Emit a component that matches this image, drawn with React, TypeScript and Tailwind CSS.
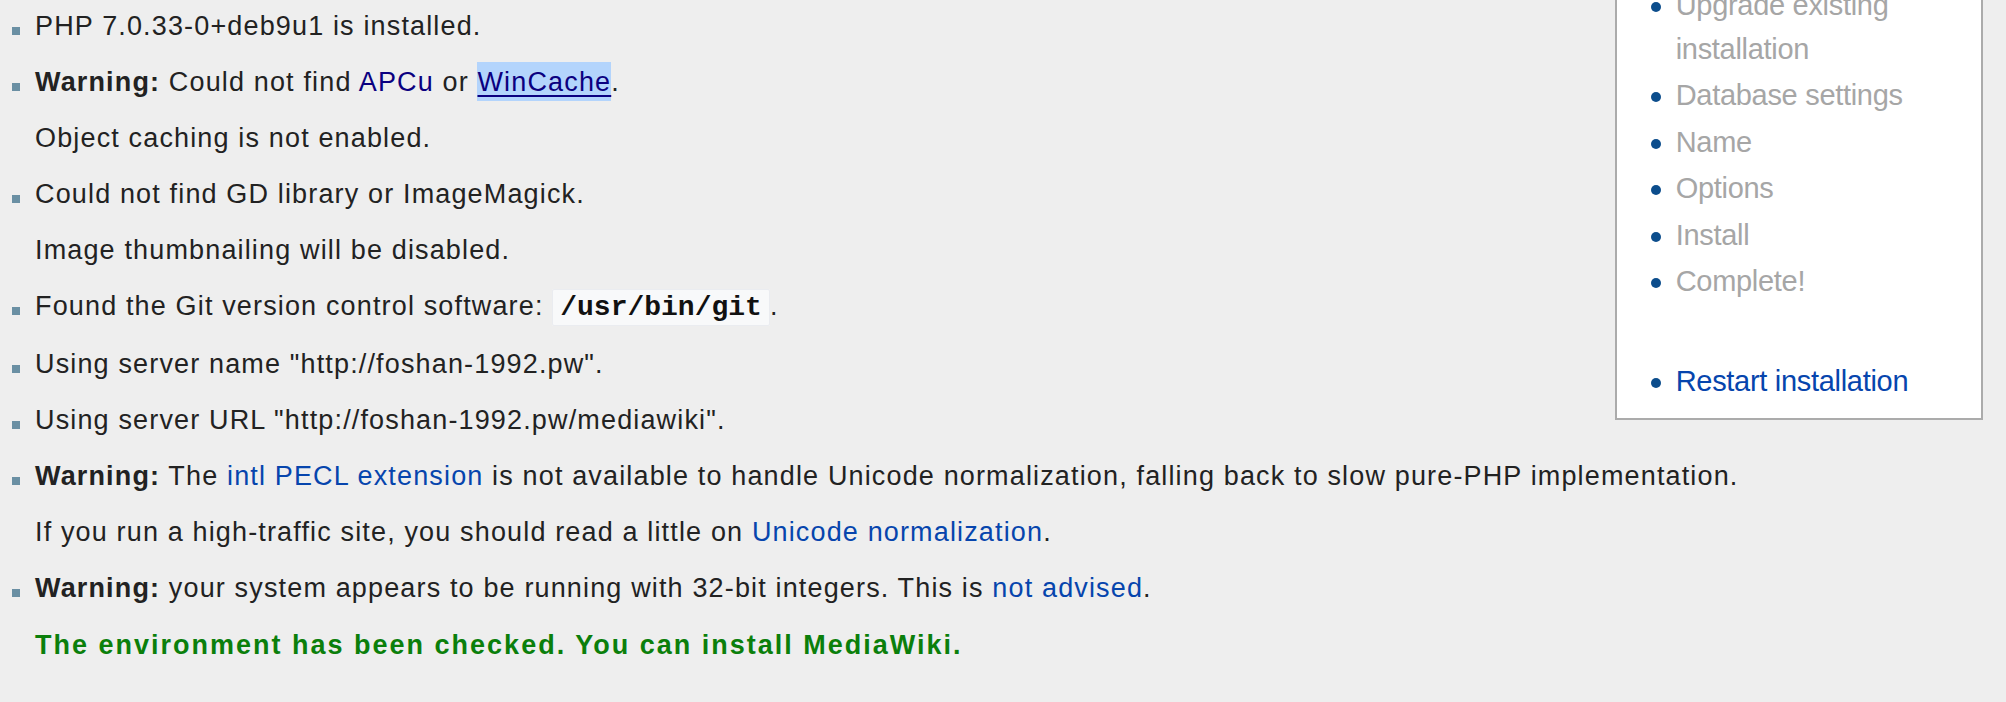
import React from "react";

function Bullet() {
  return (
    <div className="w-[35px] shrink-0">
      <div className="ml-[12px] mt-[28.5px] h-[8px] w-[8px] bg-[#6a8fa3]" />
    </div>
  );
}

function Item({ children }: { children: React.ReactNode }) {
  return (
    <li className="flex">
      <Bullet />
      <div className="min-w-0 flex-1">{children}</div>
    </li>
  );
}

function SideItem({
  children,
  className = "",
}: {
  children: React.ReactNode;
  className?: string;
}) {
  return (
    <li className={"mb-[2.4px] flex items-start leading-[44px] " + className}>
      <span className="mt-[19px] h-[10px] w-[10px] shrink-0 rounded-full bg-[#0c4d8c]" />
      <span className="ml-[14.7px]">{children}</span>
    </li>
  );
}

export default function App() {
  const link = "text-[#0645ad]";
  return (
    <div className="min-h-[702px] overflow-hidden bg-[#eeeeee] font-['Liberation_Sans',Arial,sans-serif] text-[#222222]">
      <aside className="float-right mr-[23px] mt-[-40px] w-[368px] border-2 border-[#ababab] bg-white pb-[13px] pl-[34px] pr-[16px] pt-[21px] text-[29px] tracking-[-0.3px] text-[#a6a6a6]">
        <ul>
          <SideItem>Upgrade existing installation</SideItem>
          <SideItem>Database settings</SideItem>
          <SideItem>Name</SideItem>
          <SideItem>Options</SideItem>
          <SideItem>Install</SideItem>
          <SideItem>Complete!</SideItem>
          <SideItem className="mt-[56px] mb-0">
            <a className={link}>Restart installation</a>
          </SideItem>
        </ul>
      </aside>

      <ul className="mt-[-2px] text-[27px] leading-[56px] tracking-[1.15px]">
        <Item>PHP 7.0.33-0+deb9u1 is installed.</Item>
        <Item>
          <div>
            <b>Warning:</b> Could not find <a className="text-[#0b0080]">APCu</a> or{" "}
            <a className="bg-[#b3d4fc] pb-[4px] pt-[5px] text-[#0b0080] underline decoration-[#0b0080] decoration-[2px] underline-offset-[4px]">
              WinCache
            </a>
            .
          </div>
          <div>Object caching is not enabled.</div>
        </Item>
        <Item>
          <div>Could not find GD library or ImageMagick.</div>
          <div>Image thumbnailing will be disabled.</div>
        </Item>
        <Item>
          Found the Git version control software:{" "}
          <code className="rounded-[2px] border border-[#eaecf0] bg-[#f8f9fa] px-[7px] py-[2px] font-['Liberation_Mono','Courier_New',monospace] text-[28px] font-bold tracking-normal text-[#111111]">
            /usr/bin/git
          </code>
          .
        </Item>
        <Item>Using server name "http://foshan-1992.pw".</Item>
        <Item>Using server URL "http://foshan-1992.pw/mediawiki".</Item>
        <Item>
          <div>
            <b>Warning:</b> The <a className={link}>intl PECL extension</a> is not available to
            handle Unicode normalization, falling back to slow pure-PHP implementation.
          </div>
          <div>
            If you run a high-traffic site, you should read a little on{" "}
            <a className={link}>Unicode normalization</a>.
          </div>
        </Item>
        <Item>
          <b>Warning:</b> your system appears to be running with 32-bit integers. This is{" "}
          <a className={link}>not advised</a>.
        </Item>
      </ul>
      <p className="mt-[1px] pl-[35px] text-[27px] font-bold leading-[56px] tracking-[2px] text-[#0b7f0b]">
        The environment has been checked. You can install MediaWiki.
      </p>
    </div>
  );
}
